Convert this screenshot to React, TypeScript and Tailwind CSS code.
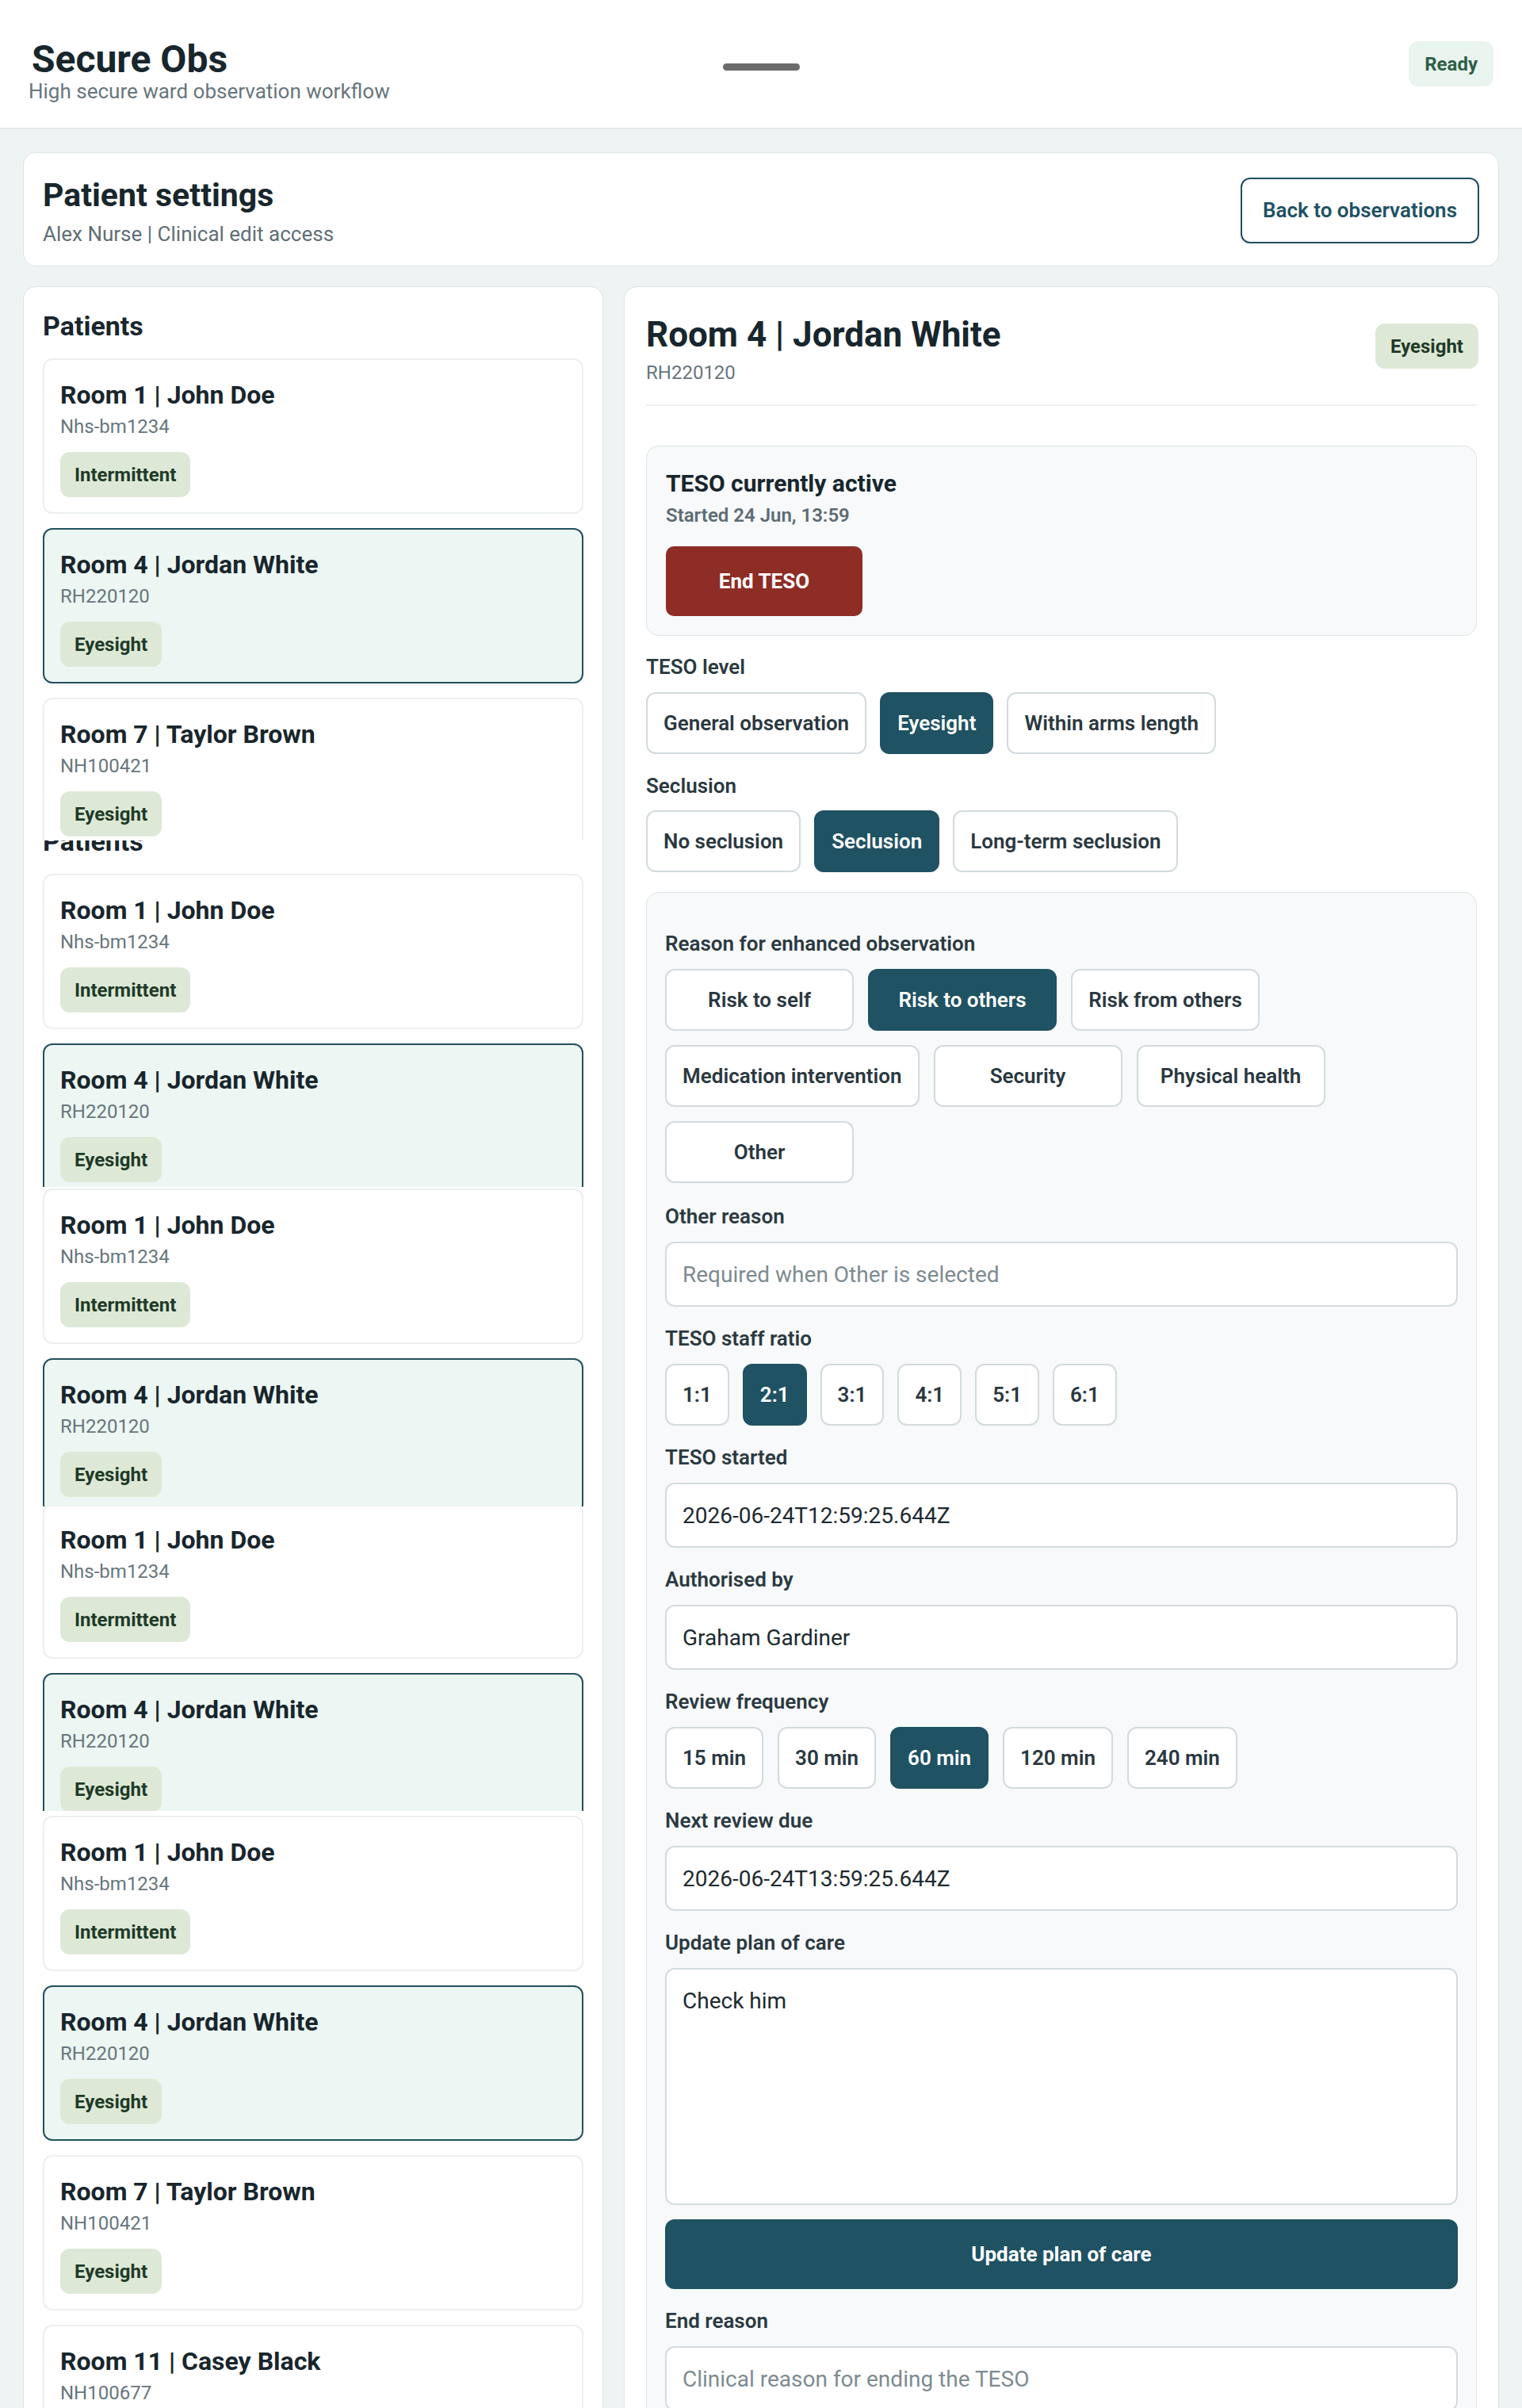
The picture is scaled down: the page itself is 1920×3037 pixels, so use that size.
import React from "react";

type Patient = { room: string; name: string; id: string; level: string };

const JOHN: Patient = { room: "Room 1", name: "John Doe", id: "Nhs-bm1234", level: "Intermittent" };
const JORDAN: Patient = { room: "Room 4", name: "Jordan White", id: "RH220120", level: "Eyesight" };
const TAYLOR: Patient = { room: "Room 7", name: "Taylor Brown", id: "NH100421", level: "Eyesight" };
const CASEY: Patient = { room: "Room 11", name: "Casey Black", id: "NH100677", level: "Eyesight" };

function LevelBadge({ children }: { children: React.ReactNode }) {
  return (
    <span className="inline-flex h-[57px] items-center rounded-[12px] bg-[#dde9d6] px-[18px] text-[24px] font-bold text-[#1f3a28]">
      {children}
    </span>
  );
}

function PatientCard({ patient, selected }: { patient: Patient; selected?: boolean }) {
  return (
    <div
      className={`flex h-[196px] flex-col rounded-[12px] border-2 px-[20px] pt-[21px] ${
        selected ? "border-[#23505f] bg-[#ecf6f2]" : "border-[#eceff0] bg-white"
      }`}
    >
      <h3 className="text-[32px] leading-[46px] font-bold text-[#18262d]">
        {patient.room} | {patient.name}
      </h3>
      <p className="text-[24px] leading-[34px] text-[#67767d]">{patient.id}</p>
      <div className="mt-[15px]">
        <LevelBadge>{patient.level}</LevelBadge>
      </div>
    </div>
  );
}

function PatientsHeading() {
  return <h2 className="text-[34px] leading-[51px] font-bold text-[#18262d]">Patients</h2>;
}

function OptionButton({ label, active, wide }: { label: string; active?: boolean; wide?: boolean }) {
  return (
    <button
      type="button"
      className={`flex h-[78px] items-center justify-center rounded-[12px] border-2 px-[20px] text-[26px] font-semibold ${
        wide ? "min-w-[238px]" : ""
      } ${active ? "border-[#1f5263] bg-[#1f5263] text-white" : "border-[#d2dbde] bg-white text-[#2a383f]"}`}
    >
      {label}
    </button>
  );
}

function FieldLabel({ children }: { children: React.ReactNode }) {
  return <label className="block text-[26px] leading-[39px] font-semibold text-[#2b3a41]">{children}</label>;
}

function TextField({ value, placeholder }: { value?: string; placeholder?: string }) {
  return (
    <input
      readOnly
      defaultValue={value}
      placeholder={placeholder}
      className="mt-[12px] block h-[82px] w-full rounded-[12px] border-2 border-[#d3dcdf] bg-white px-[20px] text-[28px] text-[#1d2a30] outline-none placeholder:text-[#7d8b91]"
    />
  );
}

export default function App() {
  return (
    <div className="min-h-screen bg-[#eef4f3] font-['Roboto',sans-serif] text-[#18262d]">
      {/* Top bar */}
      <header className="grid grid-cols-[1fr_auto_1fr] border-b-2 border-[#e2e8e9] bg-white px-[36px] pt-[50px] pb-[30px]">
        <div>
          <h1 className="ml-[4px] text-[48px] leading-[50px] font-bold text-[#18262d]">Secure Obs</h1>
          <p className="text-[26px] leading-[31px] text-[#67767d]">High secure ward observation workflow</p>
        </div>
        <div className="mt-[30px] h-[9px] w-[97px] rounded-full bg-[#6b6b6b]" />
        <div className="flex justify-end">
          <span className="mt-[2px] inline-flex h-[57px] items-center rounded-[12px] bg-[#e9f4ee] px-[20px] text-[24px] font-bold text-[#2e5f47]">
            Ready
          </span>
        </div>
      </header>

      <main className="px-[29px] pt-[29px]">
        {/* Settings header card */}
        <section className="flex items-center justify-between rounded-[16px] border border-[#dde4e6] bg-white px-[24px] pt-[23px] pb-[20px]">
          <div>
            <h2 className="text-[41px] leading-[60px] font-bold text-[#18262d]">Patient settings</h2>
            <p className="text-[26px] leading-[39px] text-[#5f6e75]">Alex Nurse | Clinical edit access</p>
          </div>
          <button
            type="button"
            className="h-[83px] rounded-[12px] border-2 border-[#1f4e5f] bg-white px-[26px] text-[26px] font-semibold text-[#1f5163]"
          >
            Back to observations
          </button>
        </section>

        <div className="mt-[25px] grid grid-cols-[732px_1fr] items-start gap-[26px]">
          {/* Patient list */}
          <section className="rounded-[16px] border border-[#dde4e6] bg-white px-[24px] pt-[24px] pb-[40px]">
            <PatientsHeading />
            <div className="mt-[15px] flex flex-col gap-[18px]">
              <PatientCard patient={JOHN} />
              <PatientCard patient={JORDAN} selected />
              <div className="h-[180px] overflow-hidden">
                <PatientCard patient={TAYLOR} />
              </div>
            </div>

            <div className="overflow-hidden">
              <div className="-mt-[24px]">
                <PatientsHeading />
                <div className="mt-[15px] flex flex-col gap-[18px]">
                  <PatientCard patient={JOHN} />
                  <div className="h-[181px] overflow-hidden">
                    <PatientCard patient={JORDAN} selected />
                  </div>
                </div>
              </div>
            </div>

            <div className="mt-[2px] flex flex-col gap-[18px]">
              <PatientCard patient={JOHN} />
              <div className="h-[187px] overflow-hidden">
                <PatientCard patient={JORDAN} selected />
              </div>
            </div>

            <div className="h-[192px] overflow-hidden">
              <div className="-mt-[4px]">
                <PatientCard patient={JOHN} />
              </div>
            </div>

            <div className="mt-[18px] h-[174px] overflow-hidden">
              <PatientCard patient={JORDAN} selected />
            </div>

            <div className="mt-[6px] flex flex-col gap-[18px]">
              <PatientCard patient={JOHN} />
              <PatientCard patient={JORDAN} selected />
              <PatientCard patient={TAYLOR} />
              <PatientCard patient={CASEY} />
            </div>
          </section>

          {/* Patient detail */}
          <section className="rounded-[16px] border border-[#dde4e6] bg-white p-[27px] pb-[60px]">
            <div className="flex items-center justify-between border-b-2 border-[#eef1f2] pb-[22px]">
              <div>
                <h2 className="text-[44px] leading-[66px] font-bold text-[#18262d]">Room 4 | Jordan White</h2>
                <p className="-mt-[3px] text-[24px] leading-[36px] text-[#67767d]">RH220120</p>
              </div>
              <span className="-mr-[2px] -mt-[4px] inline-flex h-[57px] items-center rounded-[12px] bg-[#dde9d6] px-[19px] text-[24px] font-bold text-[#1f3a28]">
                Eyesight
              </span>
            </div>

            <div className="mt-[50px] rounded-[16px] border border-[#dde3e6] bg-[#f7f9fa] p-[24px]">
              <h3 className="text-[30px] leading-[45px] font-bold text-[#18262d]">TESO currently active</h3>
              <p className="text-[24px] leading-[36px] font-semibold text-[#5e6c73]">Started 24 Jun, 13:59</p>
              <button
                type="button"
                className="mt-[21px] h-[88px] w-[248px] rounded-[10px] bg-[#8e2c26] text-[26px] font-bold text-white"
              >
                End TESO
              </button>
            </div>

            <div className="mt-[20px]">
              <FieldLabel>TESO level</FieldLabel>
              <div className="mt-[12px] flex flex-wrap gap-[17px]">
                <OptionButton label="General observation" />
                <OptionButton label="Eyesight" active />
                <OptionButton label="Within arms length" />
              </div>
            </div>

            <div className="mt-[21px]">
              <FieldLabel>Seclusion</FieldLabel>
              <div className="mt-[11px] flex flex-wrap gap-[17px]">
                <OptionButton label="No seclusion" />
                <OptionButton label="Seclusion" active />
                <OptionButton label="Long-term seclusion" />
              </div>
            </div>

            <div className="mt-[25px] rounded-[16px] border border-[#dde3e6] bg-[#f7f9fa] px-[23px] pt-[45px] pb-[40px]">
              <FieldLabel>Reason for enhanced observation</FieldLabel>
              <div className="mt-[12px] flex flex-wrap gap-[18px]">
                <OptionButton label="Risk to self" wide />
                <OptionButton label="Risk to others" wide active />
                <OptionButton label="Risk from others" wide />
                <OptionButton label="Medication intervention" wide />
                <OptionButton label="Security" wide />
                <OptionButton label="Physical health" wide />
                <OptionButton label="Other" wide />
              </div>

              <div className="mt-[23px]">
                <FieldLabel>Other reason</FieldLabel>
                <TextField placeholder="Required when Other is selected" />
              </div>

              <div className="mt-[21px]">
                <FieldLabel>TESO staff ratio</FieldLabel>
                <div className="mt-[12px] flex flex-wrap gap-[17px]">
                  {["1:1", "2:1", "3:1", "4:1", "5:1", "6:1"].map((r) => (
                    <OptionButton key={r} label={r} active={r === "2:1"} />
                  ))}
                </div>
              </div>

              <div className="mt-[21px]">
                <FieldLabel>TESO started</FieldLabel>
                <TextField value="2026-06-24T12:59:25.644Z" />
              </div>

              <div className="mt-[21px]">
                <FieldLabel>Authorised by</FieldLabel>
                <TextField value="Graham Gardiner" />
              </div>

              <div className="mt-[21px]">
                <FieldLabel>Review frequency</FieldLabel>
                <div className="mt-[12px] flex flex-wrap gap-[18px]">
                  {["15 min", "30 min", "60 min", "120 min", "240 min"].map((f) => (
                    <OptionButton key={f} label={f} active={f === "60 min"} />
                  ))}
                </div>
              </div>

              <div className="mt-[21px]">
                <FieldLabel>Next review due</FieldLabel>
                <TextField value="2026-06-24T13:59:25.644Z" />
              </div>

              <div className="mt-[21px]">
                <FieldLabel>Update plan of care</FieldLabel>
                <textarea
                  readOnly
                  defaultValue="Check him"
                  className="mt-[12px] block h-[299px] w-full resize-none rounded-[12px] border-2 border-[#d3dcdf] bg-white p-[20px] text-[28px] leading-[39px] text-[#1d2a30] outline-none"
                />
              </div>

              <button
                type="button"
                className="mt-[18px] h-[88px] w-full rounded-[12px] bg-[#1f5263] text-[26px] font-bold text-white"
              >
                Update plan of care
              </button>

              <div className="mt-[21px]">
                <FieldLabel>End reason</FieldLabel>
                <TextField placeholder="Clinical reason for ending the TESO" />
              </div>
            </div>
          </section>
        </div>
      </main>
    </div>
  );
}
